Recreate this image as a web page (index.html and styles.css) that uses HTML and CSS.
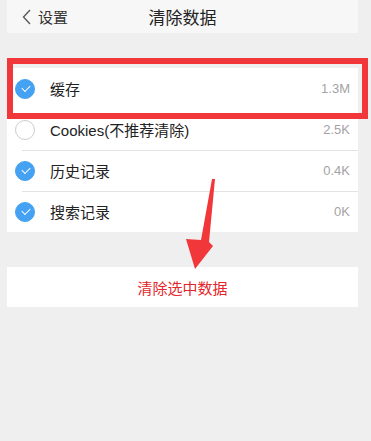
FILE: index.html
```html
<!DOCTYPE html>
<html lang="zh-CN">
<head>
  <meta charset="UTF-8">
  <meta name="viewport" content="width=device-width, initial-scale=1">
  <title>清除数据</title>
  <link rel="stylesheet" href="styles.css">
</head>
<body>
  <div class="screen">
    <!-- Верхняя панель -->
    <div class="navbar">
      <div class="back">
        <svg class="chevron" width="9" height="16" viewBox="0 0 9 16">
          <path d="M8 1 L1.5 8 L8 15" fill="none" stroke="#555" stroke-width="1.3"/>
        </svg>
        <span>设置</span>
      </div>
      <div class="title">清除数据</div>
    </div>

    <div class="list">
      <div class="row">
        <span class="check on"></span>
        <span class="name">缓存</span>
        <span class="size">1.3M</span>
      </div>
      <div class="row no-line">
        <span class="check"></span>
        <span class="name">Cookies(不推荐清除)</span>
        <span class="size">2.5K</span>
      </div>
      <div class="row">
        <span class="check on"></span>
        <span class="name">历史记录</span>
        <span class="size">0.4K</span>
      </div>
      <div class="row">
        <span class="check on"></span>
        <span class="name">搜索记录</span>
        <span class="size">0K</span>
      </div>
    </div>

    <div class="clear-btn">清除选中数据</div>

    <!-- Пометки поверх скриншота -->
    <div class="highlight"></div>
    <svg class="arrow" width="371" height="441" viewBox="0 0 371 441">
      <polygon points="212,179 215,179 209,242 213,246 195,269 186,239 201,240" fill="#f2373a"/>
    </svg>
  </div>
</body>
</html>
```

FILE: styles.css
```css
body {
  margin: 0;
  background: #efefef;
  font-family: "Liberation Sans", "Noto Sans CJK SC", sans-serif;
  color: #222;
}
.screen {
  position: relative;
  width: 371px;
  height: 441px;
  padding: 0 13px 0 7px;
  box-sizing: border-box;
  overflow: hidden;
}
.navbar {
  height: 33px;
  background: #f7f7f7;
  display: flex;
  align-items: center;
  justify-content: center;
  position: relative;
}
.back {
  position: absolute;
  left: 15px;
  top: 0;
  height: 33px;
  display: flex;
  align-items: center;
  gap: 7px;
  font-size: 15px;
  color: #333;
}
.chevron {
  margin-top: 1px;
}
.title {
  font-size: 17px;
  color: #222;
}
.list {
  margin-top: 35px;
  background: #fff;
}
.row {
  height: 41px;
  display: flex;
  align-items: center;
  padding: 0 8px;
  position: relative;
  font-size: 15px;
}
.row + .row::before {
  content: "";
  position: absolute;
  top: 0;
  left: 15px;
  right: 0;
  height: 1px;
  background: #e3e3e3;
}
.row.no-line::before {
  display: none;
}
.check {
  width: 20px;
  height: 20px;
  border-radius: 50%;
  border: 1px solid #cdcdcd;
  box-sizing: border-box;
  flex-shrink: 0;
  position: relative;
}
.check.on {
  background: #45a2f2;
  border-color: #45a2f2;
}
.check.on::after {
  content: "";
  position: absolute;
  left: 6px;
  top: 5px;
  width: 7px;
  height: 4px;
  border-left: 1.3px solid #fff;
  border-bottom: 1.3px solid #fff;
  transform: rotate(-45deg);
}
.name {
  margin-left: 15px;
  flex: 1;
}
.size {
  font-size: 13px;
  color: #a3a3a3;
}
.clear-btn {
  margin-top: 35px;
  height: 40px;
  background: #fff;
  display: flex;
  align-items: center;
  justify-content: center;
  font-size: 15px;
  color: #e3262b;
}
.highlight {
  position: absolute;
  left: 7px;
  top: 58px;
  width: 361px;
  height: 61px;
  border: 6px solid #f2373a;
  box-sizing: border-box;
}
.arrow {
  position: absolute;
  left: 0;
  top: 0;
  pointer-events: none;
}
```
